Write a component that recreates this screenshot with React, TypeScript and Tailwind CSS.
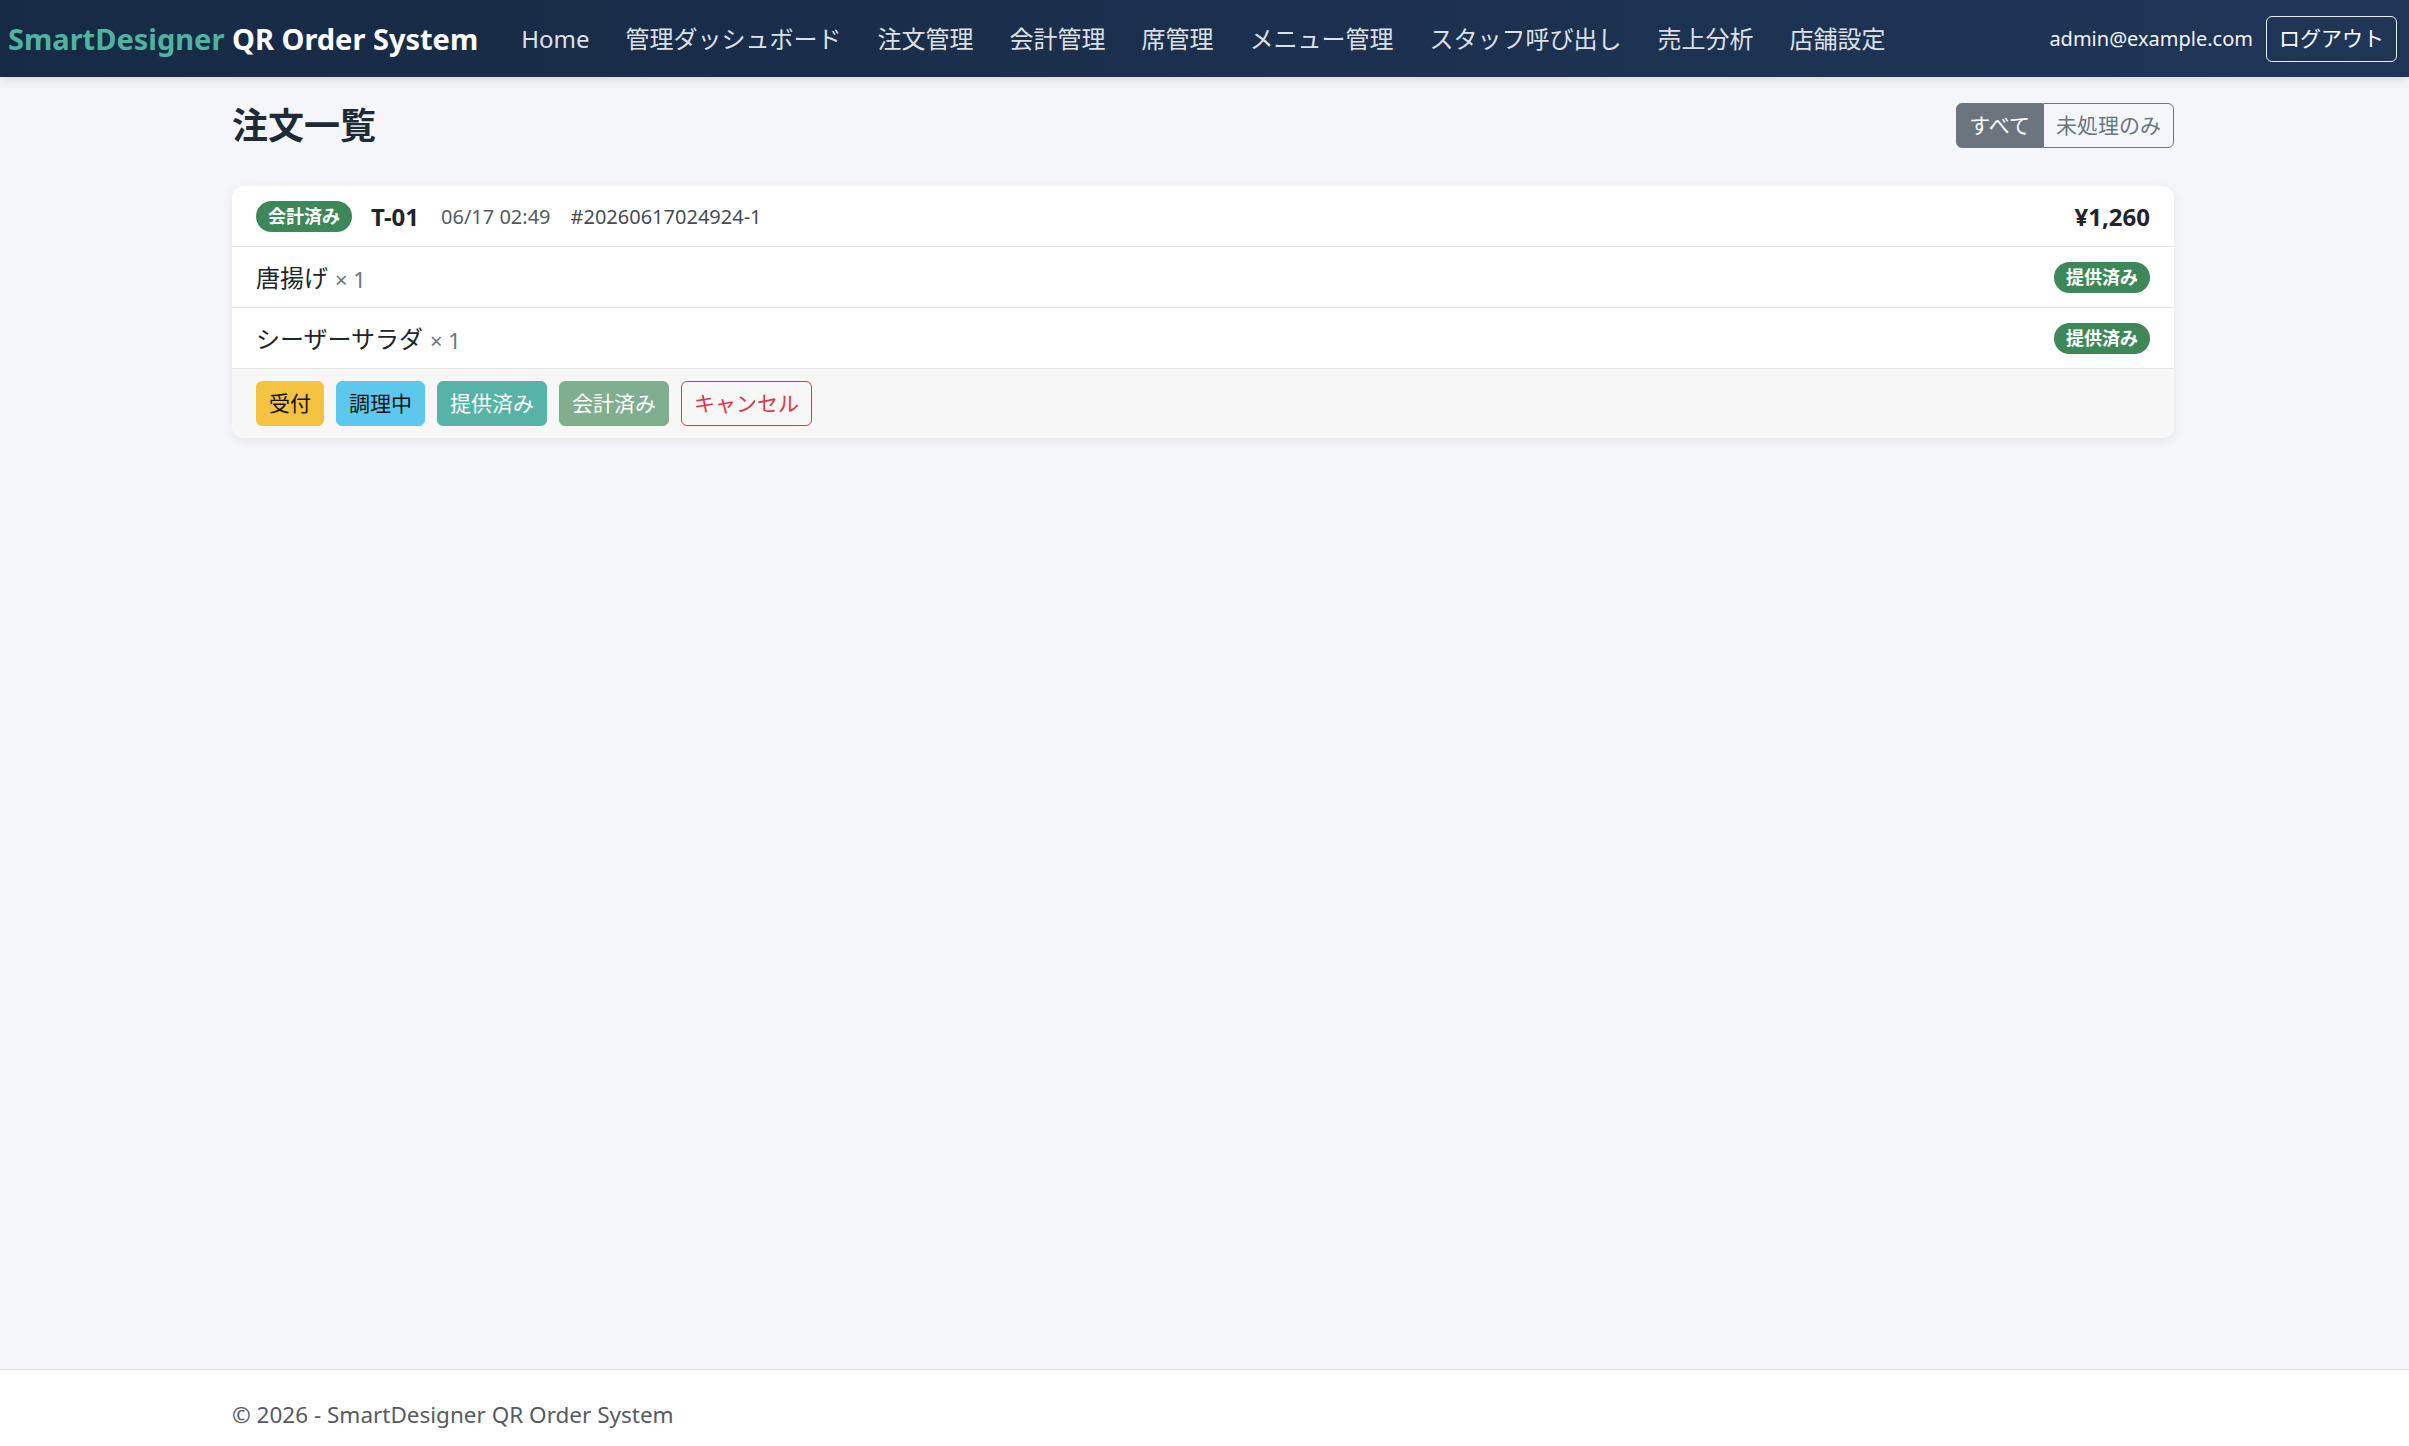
import React from 'react';

const NAV_ITEMS = [
  'Home',
  '管理ダッシュボード',
  '注文管理',
  '会計管理',
  '席管理',
  'メニュー管理',
  'スタッフ呼び出し',
  '売上分析',
  '店舗設定',
];

type OrderItem = { name: string; qty: number; status: string };

const ITEMS: OrderItem[] = [
  { name: '唐揚げ', qty: 1, status: '提供済み' },
  { name: 'シーザーサラダ', qty: 1, status: '提供済み' },
];

function Badge({ children }: { children: React.ReactNode }) {
  return (
    <span className="inline-flex h-[31px] items-center rounded-full bg-[#3e8758] px-[12px] text-[18px] font-bold leading-none text-white">
      {children}
    </span>
  );
}

function OrderCard() {
  return (
    <div className="overflow-hidden rounded-[12px] bg-white shadow-[0_3px_12px_rgba(0,0,0,0.07)]">
      <div className="flex h-[61px] items-center border-b border-[#e4e4e4] px-[24px]">
        <Badge>会計済み</Badge>
        <span className="ml-[19px] mt-[2px] text-[24px] font-bold text-[#212529]">T-01</span>
        <span className="ml-[22px] mt-[2px] text-[20px] text-[#555b61]">06/17 02:49</span>
        <span className="ml-[20px] mt-[2px] text-[20px] text-[#474c52]">#20260617024924-1</span>
        <span className="ml-auto mt-[2px] text-[24px] font-bold text-[#212529]">¥1,260</span>
      </div>

      {ITEMS.map((item) => (
        <div
          key={item.name}
          className="flex h-[61px] items-center border-b border-[#e4e4e4] px-[24px]"
        >
          <span className="mt-[2px] text-[24px] text-[#212529]">{item.name}</span>
          <span className="ml-[7px] mt-[5px] text-[22px] text-[#6c757d]">× {item.qty}</span>
          <span className="ml-auto">
            <Badge>{item.status}</Badge>
          </span>
        </div>
      ))}

      <div className="flex items-center gap-[12px] bg-[#f7f7f7] px-[24px] py-[12px]">
        <button className="h-[45px] rounded-[6px] border border-[#f5c342] bg-[#f5c342] px-[12px] text-[21px] text-[#111]">
          受付
        </button>
        <button className="h-[45px] rounded-[6px] border border-[#5dc8ee] bg-[#5dc8ee] px-[12px] text-[21px] text-[#111]">
          調理中
        </button>
        <button className="h-[45px] rounded-[6px] border border-[#56b3a5] bg-[#56b3a5] px-[12px] text-[21px] text-white">
          提供済み
        </button>
        <button className="h-[45px] rounded-[6px] border border-[#82ae90] bg-[#82ae90] px-[12px] text-[21px] text-white">
          会計済み
        </button>
        <button className="h-[45px] rounded-[6px] border border-[#dc3545] bg-transparent px-[12px] text-[21px] text-[#dc3545]">
          キャンセル
        </button>
      </div>
    </div>
  );
}

export default function App() {
  return (
    <div className="flex h-screen flex-col bg-[#f5f6fa] font-['Noto_Sans','Noto_Sans_CJK_JP',sans-serif] text-[#212529]">
      <header className="relative z-10 flex h-[77px] shrink-0 items-center bg-gradient-to-r from-[#172a45] to-[#1f3657] pl-[8px] pr-[12px] shadow-[0_3px_10px_rgba(0,0,0,0.12)]">
        <a className="mr-[43px] whitespace-nowrap text-[29px] font-bold leading-none">
          <span className="text-[#4fb3a0]">SmartDesigner</span>{' '}
          <span className="text-white">QR Order System</span>
        </a>
        <nav className="flex items-center gap-[36px] text-[24px] text-[#dde1e6]">
          {NAV_ITEMS.map((label) => (
            <a key={label} className="whitespace-nowrap">
              {label}
            </a>
          ))}
        </nav>
        <div className="ml-auto flex items-center gap-[13px]">
          <span className="text-[20px] text-[#f3f4f6]">admin@example.com</span>
          <button className="h-[46px] rounded-[6px] border border-[#e9ecef] px-[12px] text-[21px] text-white">
            ログアウト
          </button>
        </div>
      </header>

      <main className="flex-1 pr-[3px]">
        <div className="mx-auto w-[1942px] pt-[26px]">
          <div className="mb-[38px] flex h-[45px] items-center justify-between">
            <h1 className="text-[36px] font-bold text-[#1f2a37]">注文一覧</h1>
            <div className="flex h-[45px] text-[21px]">
              <button className="rounded-l-[6px] border border-[#6c757d] bg-[#6c757d] px-[12px] text-white">
                すべて
              </button>
              <button className="rounded-r-[6px] border border-[#6c757d] px-[12px] text-[#6c757d]">
                未処理のみ
              </button>
            </div>
          </div>
          <OrderCard />
        </div>
      </main>

      <footer className="h-[77px] shrink-0 overflow-hidden border-t border-[#e2e5e9] bg-white pr-[3px]">
        <div className="mx-auto w-[1942px] whitespace-nowrap text-[22.5px] leading-[90px] text-[#555b61]">
          © 2026 - SmartDesigner QR Order System
        </div>
      </footer>
    </div>
  );
}
